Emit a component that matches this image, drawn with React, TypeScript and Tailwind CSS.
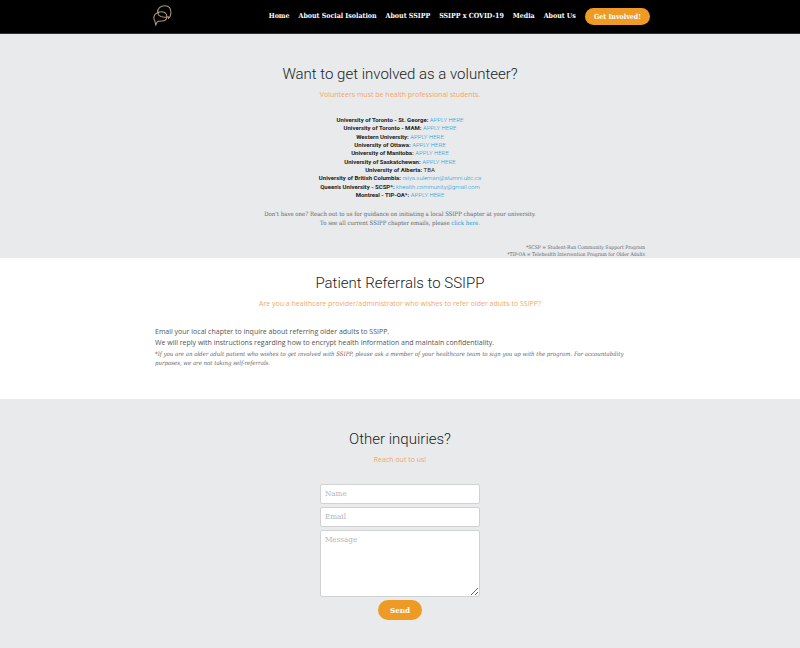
import type { ReactNode } from "react";

const SERIF = "font-['DejaVu_Serif_Condensed','DejaVu_Serif',serif]";

const navItems = ["Home", "About Social Isolation", "About SSIPP", "SSIPP x COVID-19", "Media", "About Us"];

type Chapter = { name: string; contact: string; link: boolean };

const chapters: Chapter[] = [
  { name: "University of Toronto - St. George:", contact: "APPLY HERE", link: true },
  { name: "University of Toronto - MAM:", contact: "APPLY HERE", link: true },
  { name: "Western University:", contact: "APPLY HERE", link: true },
  { name: "University of Ottawa:", contact: "APPLY HERE", link: true },
  { name: "University of Manitoba:", contact: "APPLY HERE", link: true },
  { name: "University of Saskatchewan:", contact: "APPLY HERE", link: true },
  { name: "University of Alberta:", contact: "TBA", link: false },
  { name: "University of British Columbia:", contact: "raiya.suleman@alumni.ubc.ca", link: true },
  { name: "Queen's University - SCSP*:", contact: "khealth.community@gmail.com", link: true },
  { name: "Montreal - TIP-OA*:", contact: "APPLY HERE", link: true },
];

function Logo() {
  return (
    <svg viewBox="0 0 24 24" className="h-6 w-6" fill="none" stroke="#a8977a" strokeWidth="1.1" strokeLinecap="round" strokeLinejoin="round" aria-label="SSIPP">
      <path d="M6.500 8.500C6.500 4.500 9.500 1.800 13.500 1.800C17.500 1.800 20 4.500 20 8.500C20 11 19 13 17.500 14.500V12.800C13.500 13.500 9.500 13.300 7.500 11C6.300 9.300 8 7.600 10.500 7.800C13.500 8 15.800 10 15.800 12.800C15.800 15.800 13.500 17 11 17C8.500 17 6.800 17.200 6 18.200L4.700 21.200L4 17.500C2 14.500 2.500 10.800 5.500 9.200C7 8.300 8.700 7.700 10.500 7.800" />
    </svg>
  );
}

function Heading({ title, children }: { title: string; children: ReactNode }) {
  return (
    <div className="text-center">
      <h2 className="text-[15px] leading-5 font-light text-[#222]">{title}</h2>
      <p className="mt-[3px] font-['Open_Sans',sans-serif] text-[7px] leading-4 text-[#f3a867]">{children}</p>
    </div>
  );
}

export default function App() {
  return (
    <div className="min-h-screen bg-[#e8eaec] font-['Roboto',sans-serif] text-[#222]">
      <header className="border-b border-[#333] bg-black">
        <div className="mx-auto flex h-[33px] max-w-[500px] items-center justify-between">
          <a href="#home" className="pb-0.5 pl-px"><Logo /></a>
          <nav className={`flex items-center gap-[9px] text-[7px] font-bold whitespace-nowrap text-white ${SERIF}`}>
            {navItems.map((item) => (
              <a key={item} href="#top">{item}</a>
            ))}
            <a href="#involved" className="rounded-full bg-[#ee9b25] px-[9px] py-1 leading-[9px]">Get Involved!</a>
          </nav>
        </div>
      </header>

      <main>
        <section className="pt-[30px]">
          <Heading title="Want to get involved as a volunteer?">Volunteers must be health professional students.</Heading>
          <ul className="mt-[13px] flex h-[83px] flex-col justify-between text-center text-[6px] leading-[8px]">
            {chapters.map((c) => (
              <li key={c.name}>
                <strong className="font-bold">{c.name}</strong>{" "}
                {c.link ? <a href="#apply" className="font-light text-[#1a9ad7]">{c.contact}</a> : c.contact}
              </li>
            ))}
          </ul>
          <p className={`mt-2.5 text-center text-[6px] leading-[9px] text-[#5f666d] ${SERIF}`}>
            Don't have one? Reach out to us for guidance on initiating a local SSIPP chapter at your university.
            <br />
            To see all current SSIPP chapter emails, please <a href="#emails" className="text-[#1a9ad7]">click here.</a>
          </p>
          <p className={`mx-auto mt-[17px] max-w-[490px] text-right text-[5px] leading-[7px] text-[#5f666d] ${SERIF}`}>
            *SCSP = Student-Run Community Support Program
            <br />
            *TIP-OA = Telehealth Intervention Program for Older Adults
          </p>
        </section>

        <section className="bg-white pt-[15px] pb-8">
          <Heading title="Patient Referrals to SSIPP">
            Are you a healthcare provider/administrator who wishes to refer older adults to SSIPP?
          </Heading>
          <div className="mx-auto mt-3.5 max-w-[490px]">
            <p className="font-['Open_Sans',sans-serif] text-[7px] leading-[11px] text-[#555]">
              Email your local chapter to inquire about referring older adults to SSIPP.
              <br />
              We will reply with instructions regarding how to encrypt health information and maintain confidentiality.
            </p>
            <p className={`mt-px text-[6px] leading-[9px] text-[#5f666d] italic ${SERIF}`}>
              *If you are an older adult patient who wishes to get involved with SSIPP, please ask a member of your healthcare team to sign you up with the program. For accountability purposes, we are not taking self-referrals.
            </p>
          </div>
        </section>

        <section className="pt-[30px] pb-7">
          <Heading title="Other inquiries?">Reach out to us!</Heading>
          <form className={`mx-auto mt-4 flex w-40 flex-col gap-[3px] text-[8px] ${SERIF}`}>
            <input aria-label="Name" placeholder="Name" className="h-5 rounded-xs border border-[#d0d2d4] bg-white px-1 pb-0.5 placeholder:text-[#b4b6b8]" />
            <input aria-label="Email" placeholder="Email" className="h-5 rounded-xs border border-[#d0d2d4] bg-white px-1 pb-0.5 placeholder:text-[#b4b6b8]" />
            <textarea aria-label="Message" placeholder="Message" className="h-[67px] rounded-xs border border-[#d0d2d4] bg-white px-1 py-[3px] placeholder:text-[#b4b6b8]" />
            <button type="button" className="h-5 self-center rounded-full bg-[#ee9b25] px-3 font-bold text-white">Send</button>
          </form>
        </section>
      </main>
    </div>
  );
}
